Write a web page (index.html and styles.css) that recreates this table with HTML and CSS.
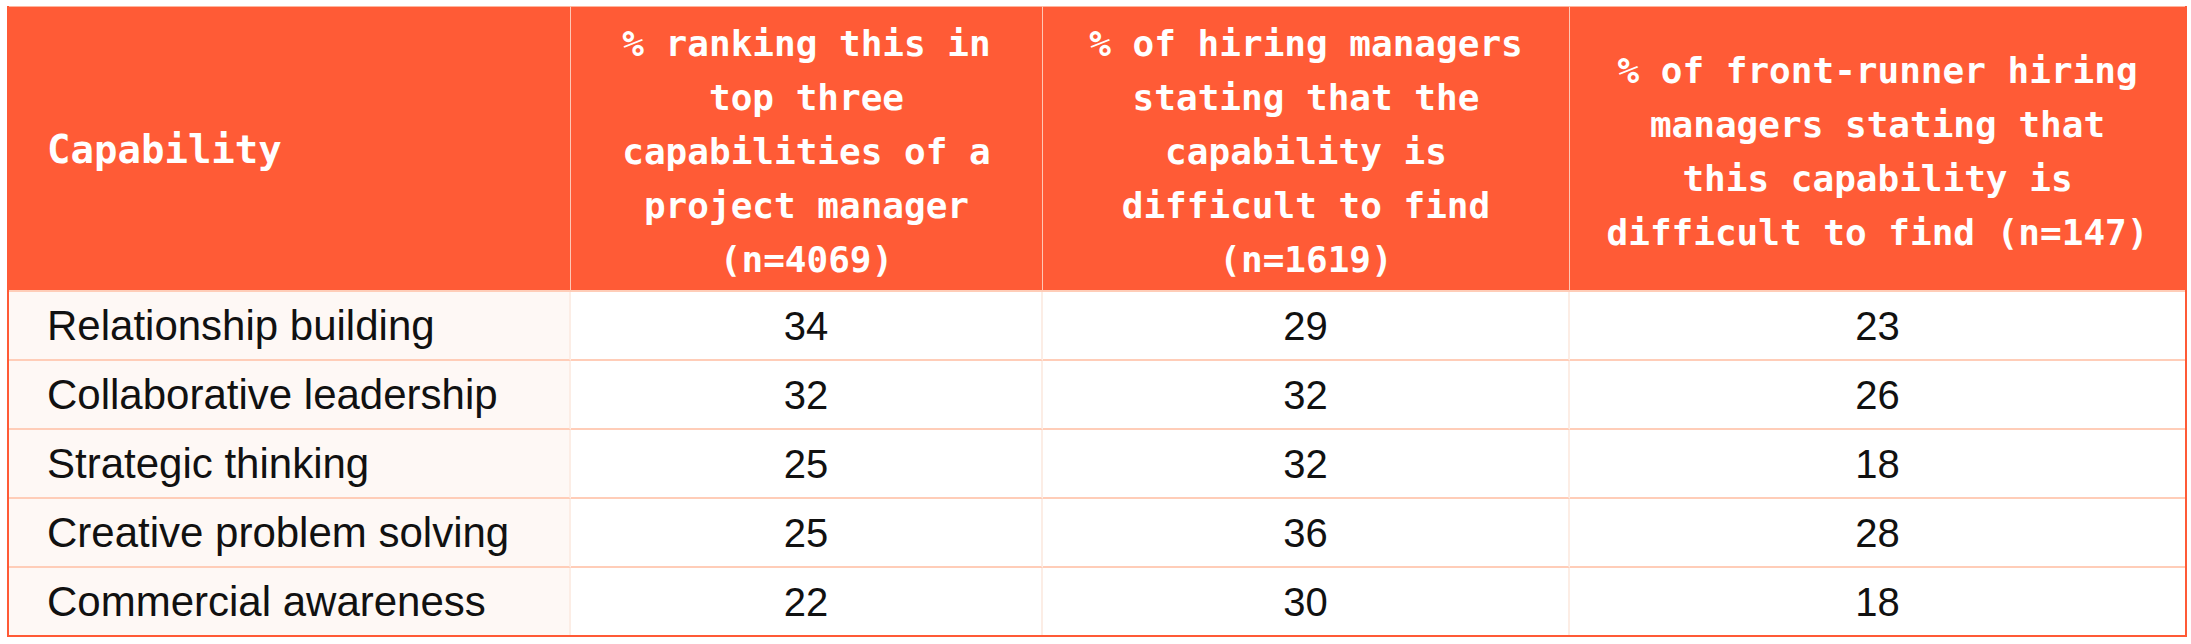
FILE: index.html
```html
<!DOCTYPE html>
<html lang="en">
<head>
<meta charset="utf-8">
<title>Project manager capabilities</title>
<link rel="stylesheet" href="styles.css">
</head>
<body>
<div class="wrap">
  <table class="cap-table">
    <colgroup>
      <col class="col-label">
      <col class="col-rank">
      <col class="col-hiring">
      <col class="col-front">
    </colgroup>
    <thead>
      <tr>
        <th class="head-label">Capability</th>
        <th>% ranking this in<br>top three<br>capabilities of a<br>project manager<br>(n=4069)</th>
        <th>% of hiring managers<br>stating that the<br>capability is<br>difficult to find<br>(n=1619)</th>
        <th class="head-last">% of front-runner hiring<br>managers stating that<br>this capability is<br>difficult to find (n=147)</th>
      </tr>
    </thead>
    <tbody>
      <tr><td class="label">Relationship building</td><td>34</td><td>29</td><td class="last">23</td></tr>
      <tr><td class="label">Collaborative leadership</td><td>32</td><td>32</td><td class="last">26</td></tr>
      <tr><td class="label">Strategic thinking</td><td>25</td><td>32</td><td class="last">18</td></tr>
      <tr><td class="label">Creative problem solving</td><td>25</td><td>36</td><td class="last">28</td></tr>
      <tr><td class="label">Commercial awareness</td><td>22</td><td>30</td><td class="last">18</td></tr>
    </tbody>
  </table>
</div>
</body>
</html>
```

FILE: styles.css
```css
html, body {
  margin: 0;
  padding: 0;
  background: #ffffff;
}

.wrap {
  padding: 6px 0 0 7px;
}

.cap-table {
  width: 2180px;
  table-layout: fixed;
  border-collapse: separate;
  border-spacing: 0;
  border-left: 2px solid #ff5a36;
  border-right: 2px solid #ff5a36;
  border-bottom: 2px solid #ff5a36;
}

.col-label { width: 562px; }
.col-rank { width: 472px; }
.col-hiring { width: 527px; }
.col-front { width: 615px; }

.cap-table th {
  box-sizing: border-box;
  height: 286px;
  padding: 7px 20px 0;
  background: #ff5b36;
  color: #ffffff;
  font-family: "DejaVu Sans Mono", monospace;
  font-weight: 700;
  font-size: 36px;
  line-height: 54px;
  text-align: center;
  vertical-align: middle;
  border-top: 1px solid #ffb49d;
  border-bottom: 2px solid #ffcdb8;
  border-right: 1px solid #ffc7b4;
}

.cap-table th.head-label {
  text-align: left;
  padding: 2px 0 0 38px;
  font-size: 39px;
}

.cap-table th.head-last {
  border-right: none;
}

.cap-table td {
  box-sizing: border-box;
  height: 69px;
  padding: 0;
  font-family: "Liberation Sans", Arial, sans-serif;
  font-size: 40px;
  line-height: 1;
  color: #111111;
  text-align: center;
  vertical-align: middle;
  background: #ffffff;
  border-bottom: 2px solid #ffcdb8;
  border-right: 2px solid #fcede5;
}

.cap-table td.label {
  text-align: left;
  padding-left: 38px;
  font-size: 42px;
  background: #fef8f5;
}

.cap-table td.last {
  border-right: none;
}

.cap-table tbody tr:last-child td {
  border-bottom: none;
  height: 67px;
}
```
